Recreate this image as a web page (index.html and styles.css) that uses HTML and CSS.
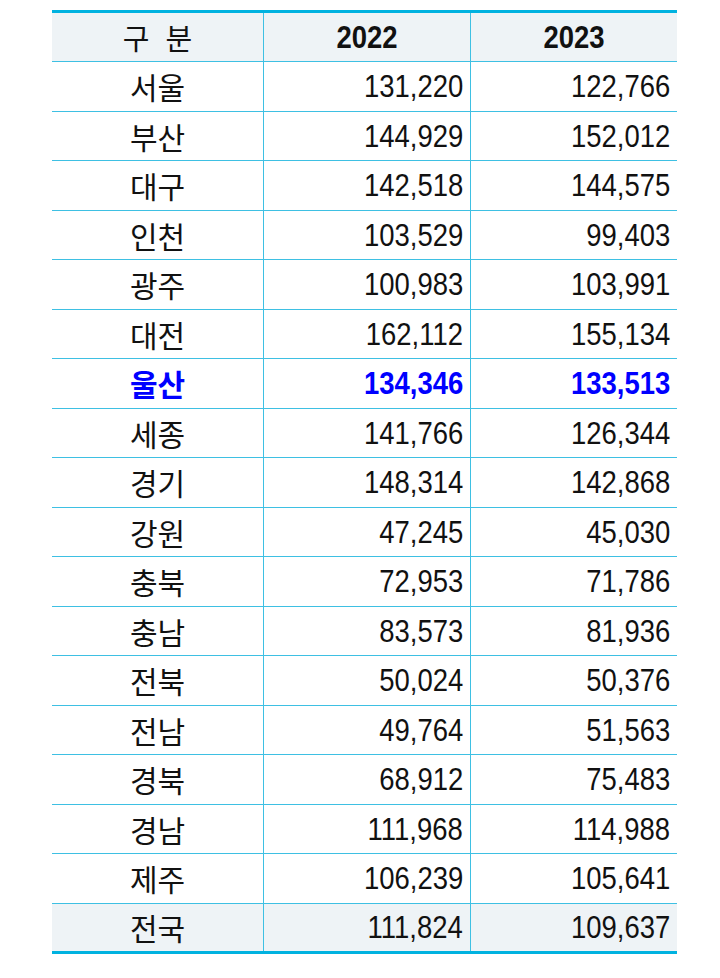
FILE: index.html
```html
<!DOCTYPE html>
<html lang="ko">
<head>
<meta charset="utf-8">
<link rel="stylesheet" href="styles.css">
</head>
<body>
<div class="wrap">
  <div class="table">
    <div class="row head">
      <div class="cell label">구&nbsp;&nbsp;분</div>
      <div class="cell year"><span class="num">2022</span></div>
      <div class="cell year"><span class="num">2023</span></div>
    </div>
    <div class="row"><div class="cell label">서울</div><div class="cell val"><span class="num">131,220</span></div><div class="cell val"><span class="num">122,766</span></div></div>
    <div class="row"><div class="cell label">부산</div><div class="cell val"><span class="num">144,929</span></div><div class="cell val"><span class="num">152,012</span></div></div>
    <div class="row"><div class="cell label">대구</div><div class="cell val"><span class="num">142,518</span></div><div class="cell val"><span class="num">144,575</span></div></div>
    <div class="row"><div class="cell label">인천</div><div class="cell val"><span class="num">103,529</span></div><div class="cell val"><span class="num">99,403</span></div></div>
    <div class="row"><div class="cell label">광주</div><div class="cell val"><span class="num">100,983</span></div><div class="cell val"><span class="num">103,991</span></div></div>
    <div class="row"><div class="cell label">대전</div><div class="cell val"><span class="num">162,112</span></div><div class="cell val"><span class="num">155,134</span></div></div>
    <div class="row hl"><div class="cell label">울산</div><div class="cell val"><span class="num">134,346</span></div><div class="cell val"><span class="num">133,513</span></div></div>
    <div class="row"><div class="cell label">세종</div><div class="cell val"><span class="num">141,766</span></div><div class="cell val"><span class="num">126,344</span></div></div>
    <div class="row"><div class="cell label">경기</div><div class="cell val"><span class="num">148,314</span></div><div class="cell val"><span class="num">142,868</span></div></div>
    <div class="row"><div class="cell label">강원</div><div class="cell val"><span class="num">47,245</span></div><div class="cell val"><span class="num">45,030</span></div></div>
    <div class="row"><div class="cell label">충북</div><div class="cell val"><span class="num">72,953</span></div><div class="cell val"><span class="num">71,786</span></div></div>
    <div class="row"><div class="cell label">충남</div><div class="cell val"><span class="num">83,573</span></div><div class="cell val"><span class="num">81,936</span></div></div>
    <div class="row"><div class="cell label">전북</div><div class="cell val"><span class="num">50,024</span></div><div class="cell val"><span class="num">50,376</span></div></div>
    <div class="row"><div class="cell label">전남</div><div class="cell val"><span class="num">49,764</span></div><div class="cell val"><span class="num">51,563</span></div></div>
    <div class="row"><div class="cell label">경북</div><div class="cell val"><span class="num">68,912</span></div><div class="cell val"><span class="num">75,483</span></div></div>
    <div class="row"><div class="cell label">경남</div><div class="cell val"><span class="num">111,968</span></div><div class="cell val"><span class="num">114,988</span></div></div>
    <div class="row"><div class="cell label">제주</div><div class="cell val"><span class="num">106,239</span></div><div class="cell val"><span class="num">105,641</span></div></div>
    <div class="row total"><div class="cell label">전국</div><div class="cell val"><span class="num">111,824</span></div><div class="cell val"><span class="num">109,637</span></div></div>
  </div>
</div>
</body>
</html>
```

FILE: styles.css
```css
html, body {
  margin: 0;
  padding: 0;
  background: #ffffff;
}
.wrap {
  padding: 10px 0 0 52px;
}
.table {
  width: 625px;
  border-top: 3px solid #00b2e0;
  border-bottom: 3px solid #00b2e0;
  font-family: "Noto Sans CJK KR", "Noto Sans", sans-serif;
  color: #111111;
}
.row {
  display: grid;
  grid-template-columns: 212px 207px 206px;
  height: 48.5px;
  border-bottom: 1px solid #3ec0e3;
}
.row.head {
  height: 48px;
  background: #eef3f6;
}
.row.total {
  height: 47px;
  border-bottom: none;
  background: #eef3f6;
}
.cell {
  display: flex;
  align-items: center;
  border-right: 1px solid #3ec0e3;
  overflow: hidden;
}
.cell:last-child {
  border-right: none;
}
.label {
  justify-content: center;
  font-size: 30px;
  line-height: 1;
}
.head .label {
  font-size: 29px;
}
.val {
  justify-content: flex-end;
  padding-right: 7px;
}
.year {
  justify-content: center;
}
.num {
  display: inline-block;
  font-family: "Liberation Sans", Arial, sans-serif;
  font-size: 30.5px;
  line-height: 1;
  transform: scaleX(0.9);
  transform-origin: right center;
}
.year .num {
  font-weight: bold;
  transform-origin: center center;
}
.hl .cell {
  color: #0000ff;
  font-weight: bold;
}
```
